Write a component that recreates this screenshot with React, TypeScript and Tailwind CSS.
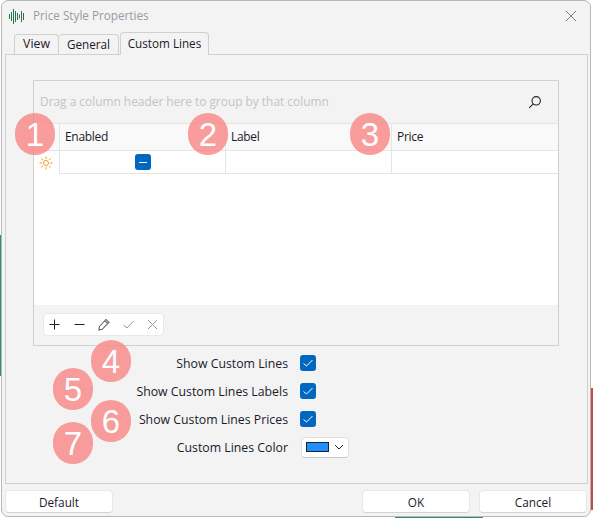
import React from "react";

const font = { fontFamily: '"Open Sans","Noto Sans",sans-serif' };

function Badge({ n, cls }: { n: string; cls: string }) {
  return (
    <div
      className={`absolute w-[40px] h-[42px] rounded-full bg-[#f98585]/80 text-white flex items-center justify-center text-[33px] leading-none ${cls}`}
      style={{ fontFamily: '"Liberation Sans",sans-serif' }}
    >
      {n}
    </div>
  );
}

function Check() {
  return (
    <div className="w-[16px] h-[16px] rounded-[3px] bg-[#0067c0] flex items-center justify-center">
      <svg width="12" height="12" viewBox="0 0 12 12" fill="none" stroke="#fff" strokeWidth="1">
        <path d="M1.5 6.5 L4.5 9 L10.5 3" />
      </svg>
    </div>
  );
}

function FormRow({ label, children }: { label: string; children: React.ReactNode }) {
  return (
    <div className="h-[28px] flex items-center">
      <div className="w-[282px] pt-[2px] text-right text-[12.3px] text-[#1a1a2a] whitespace-nowrap">{label}</div>
      <div className="ml-[12px]">{children}</div>
    </div>
  );
}

function Btn({ label, cls }: { label: string; cls: string }) {
  return (
    <div className={`h-[23px] pt-[3px] rounded-[4px] bg-white border border-[#e8e8e8] border-b-[#d4d4d4] flex items-center justify-center text-[11.8px] text-[#1a1a2a] ${cls}`}>
      {label}
    </div>
  );
}

export default function App() {
  return (
    <div className="relative w-[593px] h-[518px] bg-white overflow-hidden" style={font}>
      <div className="absolute left-0 top-[235px] w-[1px] h-[141px] bg-[#2e8b7a]" />
      <div className="absolute right-0 top-[388px] w-[2px] h-[122px] bg-[#c8474f]" />
      <div className="absolute left-[395px] bottom-0 w-[88px] h-[1px] bg-[#2e8b7a]" />
      <div className="relative ml-[1px] w-[590px] h-[517px] bg-[#f3f3f3] border border-[#b8b8b8] rounded-[7px] flex flex-col">
        {/* Title bar */}
        <div className="h-[30px] flex items-center pl-[7px] pr-[13px] shrink-0">
          <svg width="16" height="17" viewBox="0 0 16 17" stroke="#1f7a4a" strokeWidth="1" fill="none">
            <path d="M0.5 6V11M2.5 4V13M4.5 1V16M6.5 3V14M8.5 5V12" />
            <path d="M10.5 6.5V10.5" stroke="#b5343c" />
            <path d="M12.5 3V14M14.5 5V12" />
          </svg>
          <span className="ml-[8px] text-[11.7px] text-[#9a9aa2]">Price Style Properties</span>
          <svg className="ml-auto" width="12" height="12" viewBox="0 0 12 12" stroke="#7a7a7a" strokeWidth="1" fill="none">
            <path d="M1 1L11 11M11 1L1 11" />
          </svg>
        </div>
        {/* Tabs */}
        <div className="flex items-end h-[23px] pl-[12px] shrink-0 relative z-10">
          <div className="h-[20px] w-[45px] border border-b-0 border-[#d0d0d0] rounded-t-[4px] text-[12.3px] text-[#1a1a2a] flex items-center justify-center">View</div>
          <div className="h-[20px] w-[60px] border border-b-0 border-l-0 border-[#d0d0d0] rounded-t-[4px] text-[11.7px] text-[#1a1a2a] flex items-center justify-center">General</div>
          <div className="h-[23px] w-[89px] ml-[1px] -mb-px bg-[#f3f3f3] border border-b-0 border-[#d0d0d0] rounded-t-[4px] text-[11.7px] text-[#1a1a2a] flex items-center justify-center">Custom Lines</div>
        </div>
        {/* Panel */}
        <div className="ml-[3px] mr-[2px] h-[430px] shrink-0 border border-[#d0d0d0] pt-[25px] pl-[27px]">
          <div className="w-[526px] h-[266px] border border-[#d0d0d0] flex flex-col">
            <div className="h-[42px] shrink-0 flex items-center pl-[6px] pr-[16px]">
              <span className="text-[11.9px] text-[#c4c4c4]">Drag a column header here to group by that column</span>
              <svg className="ml-auto" width="14" height="14" viewBox="0 0 14 14" fill="none" stroke="#222" strokeWidth="1.1">
                <circle cx="8.2" cy="5.8" r="4.2" />
                <path d="M5.2 8.8L1.2 12.8" />
              </svg>
            </div>
            <div className="h-[28px] shrink-0 flex bg-[#f9f9f9] border-y border-[#e5e5e5] text-[12px] tracking-[-0.3px] text-[#1a1a2a]">
              <div className="w-[26px] border-r border-[#e5e5e5]" />
              <div className="w-[166px] border-r border-[#e5e5e5] pl-[5px] flex items-center">Enabled</div>
              <div className="w-[166px] border-r border-[#e5e5e5] pl-[5px] flex items-center">Label</div>
              <div className="flex-1 pl-[5px] flex items-center">Price</div>
            </div>
            <div className="h-[154px] shrink-0 bg-white flex flex-col">
              <div className="h-[23px] flex">
                <div className="w-[26px] flex items-center justify-center border-r border-[#e5e5e5] pr-[2px]">
                  <svg width="14" height="14" viewBox="0 0 14 14" fill="none" stroke="#f59a23" strokeWidth="1">
                    <circle cx="7" cy="7" r="2.5" />
                    <path d="M7 0.5V3M7 11V13.5M0.5 7H3M11 7H13.5M2.4 2.4L4 4M10 10L11.6 11.6M11.6 2.4L10 4M4 10L2.4 11.6" />
                  </svg>
                </div>
                <div className="w-[166px] border-r border-b border-[#e5e5e5] flex items-center justify-center">
                  <div className="w-[16px] h-[16px] rounded-[3px] bg-[#0067c0] flex items-center justify-center">
                    <div className="w-[8px] h-[1px] bg-white" />
                  </div>
                </div>
                <div className="w-[166px] border-r border-b border-[#e5e5e5]" />
                <div className="flex-1 border-b border-[#e5e5e5]" />
              </div>
            </div>
            <div className="flex-1 pt-[8px] pl-[9px]">
              <div className="w-[121px] h-[23px] bg-white rounded-[4px] border border-[#e8e8e8] flex items-center pl-[3px] gap-[9.5px]">
                <svg width="15" height="15" viewBox="0 0 15 15" stroke="#222" strokeWidth="1" fill="none"><path d="M7.5 2.5V12.5M2.5 7.5H12.5" /></svg>
                <svg width="15" height="15" viewBox="0 0 15 15" stroke="#222" strokeWidth="1" fill="none"><path d="M2.5 7.5H12.5" /></svg>
                <svg width="15" height="15" viewBox="0 0 15 15" stroke="#666" strokeWidth="1.1" fill="none"><path d="M3.5 9.5L10 2.5L13 5.2L6.2 12.3L3 13Z M8.8 3.8L11.8 6.5" /></svg>
                <svg width="15" height="15" viewBox="0 0 15 15" stroke="#999" strokeWidth="1" fill="none"><path d="M2.5 8L6 11L12.5 4" /></svg>
                <svg width="15" height="15" viewBox="0 0 15 15" stroke="#999" strokeWidth="1" fill="none"><path d="M3 3L12 12M12 3L3 12" /></svg>
              </div>
            </div>
          </div>
          <div className="mt-[3px] -ml-[27px] flex flex-col">
            <FormRow label="Show Custom Lines"><Check /></FormRow>
            <FormRow label="Show Custom Lines Labels"><Check /></FormRow>
            <FormRow label="Show Custom Lines Prices"><Check /></FormRow>
            <FormRow label="Custom Lines Color">
              <div className="ml-[1px] w-[48px] h-[21px] bg-white rounded-[4px] border border-[#e0e0e0] border-b-[#c8c8c8] flex items-center pl-[4px] gap-[5px]">
                <div className="w-[23px] h-[10px] bg-[#1e90ff] border border-[#222]" />
                <svg width="10" height="6" viewBox="0 0 10 6" stroke="#222" strokeWidth="1" fill="none"><path d="M1 1L5 5L9 1" /></svg>
              </div>
            </FormRow>
          </div>
        </div>
        {/* Footer */}
        <div className="flex pl-[3px] pt-[6px]">
          <Btn label="Default" cls="w-[108px]" />
          <Btn label="OK" cls="w-[108px] ml-[249px]" />
          <Btn label="Cancel" cls="w-[108px] ml-[9px]" />
        </div>
      </div>
      <Badge n="1" cls="left-[15px] top-[113px]" />
      <Badge n="2" cls="left-[188px] top-[113px]" />
      <Badge n="3" cls="left-[350px] top-[113px]" />
      <Badge n="4" cls="left-[91px] top-[340px]" />
      <Badge n="5" cls="left-[53px] top-[368px]" />
      <Badge n="6" cls="left-[91px] top-[400px]" />
      <Badge n="7" cls="left-[53px] top-[422px]" />
    </div>
  );
}
